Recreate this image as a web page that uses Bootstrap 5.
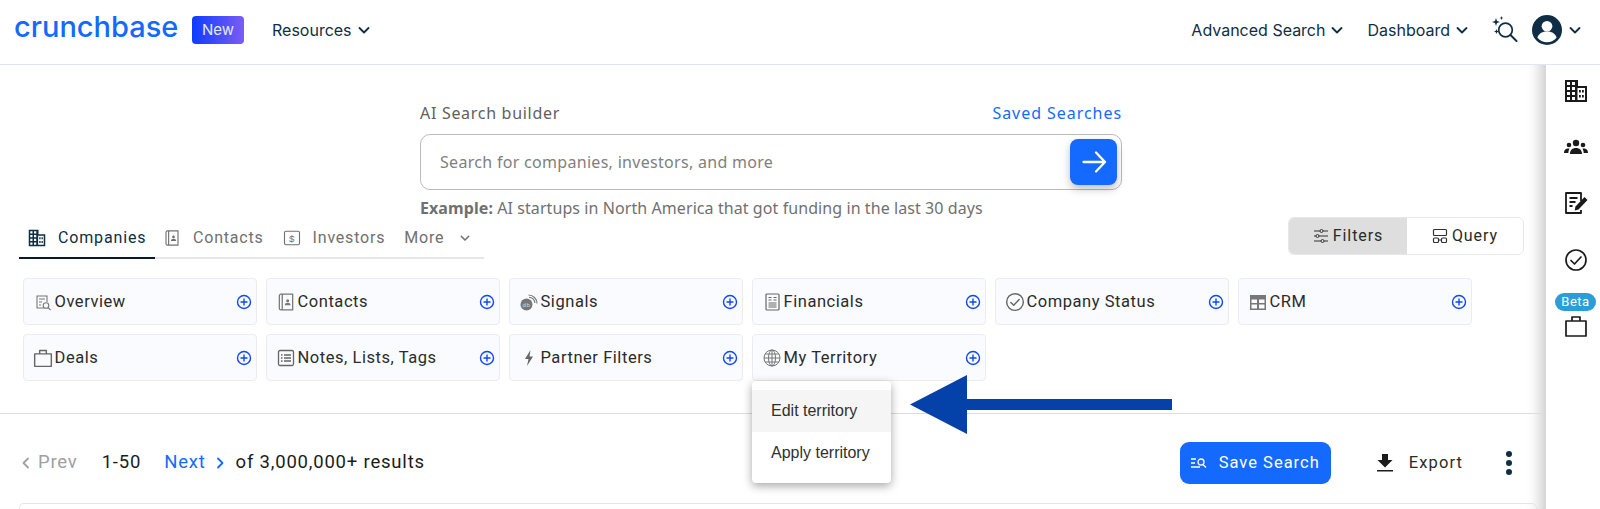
<!doctype html>
<html lang="en"><head><meta charset="utf-8"><title>Crunchbase</title>
<link href="https://cdn.jsdelivr.net/npm/bootstrap@5.3.0/dist/css/bootstrap.min.css" rel="stylesheet">
<style>
html,body{height:509px;overflow:hidden}
body{font-family:"Roboto","Noto Sans",sans-serif;color:#1c1c1c;background:#fff;font-size:16px}
.hdr{height:65px;padding:0 0 4px 14px;border-bottom:1px solid #dfe6f0;font-family:"Inter",sans-serif;color:#0f2e45;font-size:16px}
.logo{font-family:"Inter",sans-serif;font-size:29px;line-height:1;color:#146aff;font-weight:500;letter-spacing:0;margin-top:-7px;width:165px;text-decoration:none}
.newtag{width:52px;height:28px;margin-left:13px;border-radius:4px;background:linear-gradient(90deg,#0d3cff,#7c5cf5);color:#e6e8ff;font-size:15px;line-height:28px;text-align:center}
.navtxt{color:#0f2e45;text-decoration:none;display:flex;align-items:center;gap:6px;white-space:nowrap}
.sparkglass{margin-left:22px}
.avatarpic{margin-left:12px}
.navcaret{margin:0 19px 0 7px;color:#0f2e45}
.shell{height:444px}
.mainpane{width:1546px;flex:none;position:relative;box-shadow:inset -18px 0 14px -12px rgba(0,0,0,.2)}
.sidepane{width:54px;flex:none;padding:0 0 0 5px;margin-top:-2.5px}
.sideitem{height:56.4px;display:flex;align-items:center;justify-content:center;color:#1a1a1a}
.betaitem{margin-top:5px;color:#1a1a1a}
.betaitem svg{margin-top:3px}
.betatag{background:#2a9fd6;color:#fff;font-size:13px;line-height:18px;height:18px;width:41px;border-radius:9px;text-align:center;letter-spacing:.5px}
.aibox{width:702px;margin-left:420px;padding-top:38px;font-family:"Noto Sans",sans-serif}
.ailabel{font-size:16px;letter-spacing:.7px;color:#606060;line-height:20px}
.saved{color:#146aff;text-decoration:none;letter-spacing:.95px;font-size:16px;line-height:20px}
.searchbox{height:56px;margin-top:11px;border:1px solid #bbb;border-radius:10px;padding:0 4px 0 19px}
.searchbox span{color:#808080;font-size:16px;letter-spacing:.3px}
.gobtn{width:47px;height:46px;padding:0;border:0;border-radius:8px;background:#146aff;box-shadow:0 4px 8px rgba(0,0,0,.25)}
.gobtn:hover{background:#146aff}
.example{font-size:16px;color:#707070;margin-top:8px;line-height:20px;letter-spacing:.08px}
.toolrow{padding:0 22px 0 19px;margin-top:-1px;height:48px}
.tabset{width:465px;height:42px;border-bottom:2px solid #e6e6e6}
.tabitem{display:flex;align-items:center;gap:8px;height:40px;padding-top:2px;color:#707070;font-size:16px;letter-spacing:.8px;text-decoration:none;white-space:nowrap}
.tabgap{margin-left:19px}
.tabon{color:#0f2e45;border-bottom:2px solid #0a1a2a;height:42px;width:136px;padding-left:9px;letter-spacing:.85px}
.tabglyph{width:18px;height:18px;flex:none;display:block}
.viewswitch{width:236px;height:38px;border:1px solid #e8e8e8;border-radius:6px;overflow:hidden}
.viewbtn{flex:1 1 auto;display:flex;align-items:center;justify-content:center;gap:4px;font-size:16px;letter-spacing:.95px;color:#2a2a2a;text-decoration:none}
.viewon{background:#dedede;width:118px;flex:none}
.viewglyph{width:16px;height:16px;flex:none;display:block}
.filtergrid{display:grid;grid-template-columns:repeat(6,234px);grid-auto-rows:46.5px;gap:9.5px 9px;margin:13px 0 0 23px}
.fcard{background:#fafbfe;border:1px solid #ececf0;border-radius:4px;padding:2px 4px 0 8.5px;display:flex;align-items:center;gap:2px;color:#2b2b2b;font-size:16.5px;letter-spacing:.55px;white-space:nowrap}
.fcard .plus{margin-left:auto}
.ficon{width:20px;height:20px;flex:none;display:block}
.popmenu{display:block;position:absolute;left:752px;top:316px;width:139px;height:102px;min-width:0;padding:9px 0;border:0;border-radius:4px;box-shadow:0 3px 10px rgba(0,0,0,.35);font-family:"Liberation Sans",sans-serif;font-size:16px;margin:0;z-index:3}
.popmenu .dropdown-item{height:42px;line-height:42px;padding:0 0 0 19px;color:#303030}
.popmenu .hoverrow{background:#f5f5f5}
.bigarrow{position:absolute;left:908px;top:310px;z-index:4}
.splitline{border-top:1px solid #ddd;margin:32px 0 0 0;opacity:1}
.pagerow{height:89px;padding:10px 0 0 21px;font-size:18.5px;letter-spacing:.8px}
.prev{color:#a0a0a0;gap:7px}
.next{color:#146aff;text-decoration:none;gap:9px;margin-left:23px}
.pagecount{margin-left:24px}
.pagetotal{margin-left:11px}
.savebtn{width:151px;height:42px;padding:0;border:0;background:#146aff;color:#fff;border-radius:9px;font-size:16.5px;letter-spacing:1px;display:flex;align-items:center;justify-content:center;gap:12px}
.savebtn:hover{background:#146aff;color:#fff}
.exportbtn{display:flex;align-items:center;gap:16px;margin-left:46px;font-size:16.5px;letter-spacing:1.1px;color:#2b2b2b}
.kebab{margin:0 33px 0 42px;display:block}
.resultcard{height:20px;margin:0 9px 0 19px;border:1px solid #e5e5e5;border-bottom:0;border-radius:5px 5px 0 0}
</style></head><body>
<svg width="0" height="0" class="position-absolute">
<defs>
<symbol id="i-building" viewBox="0 0 24 24"><path fill="currentColor" fill-rule="evenodd" d="M1 1h13v6h9v16H1zM3 3v3h3V3zM8 3v3h3V3zM3 8v3h3V8zM8 8v3h3V8zM3 13v3h3v-3zM8 13v3h3v-3zM3 18v3h3v-3zM8 18v3h3v-3zM13.500 9v12H21V9zM15 11h1.800v2.500H15zM18 11h1.800v2.500H18zM15 16h1.800v2.500H15zM18 16h1.800v2.500H18z"/></symbol>
<symbol id="i-contact" viewBox="0 0 24 24"><path fill="none" stroke="currentColor" stroke-width="1.500" d="M6 2.500h14v19H6a2 2 0 0 1-2-2v-15a2 2 0 0 1 2-2zM7.500 2.500v19"/><circle cx="14" cy="10.500" r="1.800" fill="currentColor"/><path fill="currentColor" d="M10.500 16c0-2 1.500-3 3.500-3s3.500 1 3.500 3z"/></symbol>
<symbol id="i-dollar" viewBox="0 0 24 24"><rect x="2" y="3" width="20" height="18" rx="2" fill="none" stroke="currentColor" stroke-width="1.500"/><text x="12" y="17" font-size="13" text-anchor="middle" fill="currentColor" font-family="Liberation Sans">$</text></symbol>
<symbol id="i-plus" viewBox="0 0 16 16"><circle cx="8" cy="8" r="6.500" fill="none" stroke="#1146ff" stroke-width="1.400"/><path d="M8 4.500v7M4.500 8h7" stroke="#1146ff" stroke-width="1.400"/></symbol>
<symbol id="i-chev" viewBox="0 0 12 12"><path d="M1.500 4l4.500 4.500L10.500 4" fill="none" stroke="currentColor" stroke-width="1.800" stroke-linecap="round" stroke-linejoin="round"/></symbol>
<symbol id="i-brief" viewBox="0 0 24 24"><path fill="none" stroke="currentColor" stroke-width="1.700" stroke-linejoin="round" d="M2 7h20v15H2zM8 7V3h8v4"/></symbol>
<symbol id="i-check" viewBox="0 0 24 24"><circle cx="12" cy="12" r="10" fill="none" stroke="currentColor" stroke-width="1.700"/><path d="M7 12.500l3.500 3.500L17 9" fill="none" stroke="currentColor" stroke-width="1.700" stroke-linecap="round" stroke-linejoin="round"/></symbol>
</defs></svg>

<nav class="navbar hdr d-flex flex-nowrap align-items-center justify-content-start">
 <a class="logo" href="#">crunchbase</a>
 <span class="newtag">New</span>
 <a class="navtxt ms-4 ps-1" href="#">Resources <svg width="12" height="12"><use href="#i-chev"/></svg></a>
 <div class="d-flex align-items-center ms-auto">
  <a class="navtxt" href="#">Advanced Search <svg width="12" height="12"><use href="#i-chev"/></svg></a>
  <a class="navtxt ms-4" href="#">Dashboard <svg width="12" height="12"><use href="#i-chev"/></svg></a>
  <svg class="sparkglass" width="30" height="30" viewBox="0 0 30 30" fill="none" stroke="#0f2e45"><circle cx="15.500" cy="15" r="6.800" stroke-width="1.700"/><path d="M20.500 20l6 6" stroke-width="2" stroke-linecap="round"/><path fill="#0f2e45" stroke="none" d="M6 3l1 3 3 1-3 1-1 3-1-3-3-1 3-1zM11.500 1l.5 1.500 1.500.5-1.500.5-.5 1.500-.5-1.500-1.500-.5 1.500-.5zM6.500 14l.7 1.800 1.800.7-1.800.7-.7 1.800-.7-1.800-1.800-.7 1.800-.7z"/></svg>
  <svg class="avatarpic" width="30" height="30" viewBox="0 0 28 28"><circle cx="14" cy="14" r="14" fill="#0f2e45"/><circle cx="14" cy="10.500" r="5" fill="#fff"/><path fill="#fff" d="M5 21c1.500-4 5-5.500 9-5.500s7.500 1.500 9 5.500c-2 2.800-5.500 4.500-9 4.500S7 23.800 5 21z"/></svg>
  <svg class="navcaret" width="12" height="12"><use href="#i-chev"/></svg>
 </div>
</nav>

<div class="shell d-flex">
 <main class="mainpane">
  <section class="aibox">
   <div class="d-flex justify-content-between"><span class="ailabel">AI Search builder</span><a class="saved" href="#">Saved Searches</a></div>
   <div class="searchbox d-flex align-items-center justify-content-between">
    <span>Search for companies, investors, and more</span>
    <button class="btn gobtn" aria-label="Search"><svg width="26" height="26" viewBox="0 0 26 26" fill="none" stroke="#fff" stroke-width="2.300" stroke-linecap="round" stroke-linejoin="round"><path d="M2.500 13h21M15 3.500l9 9.500-9 9.500"/></svg></button>
   </div>
   <div class="example"><b>Example:</b> AI startups in North America that got funding in the last 30 days</div>
  </section>
  <div class="toolrow d-flex justify-content-between align-items-start">
   <div class="tabset d-flex">
    <a class="tabitem tabon" href="#"><svg class="tabglyph"><use href="#i-building"/></svg><span class="ms-1">Companies</span></a>
    <a class="tabitem ms-2" href="#"><svg class="tabglyph"><use href="#i-contact"/></svg><span class="ms-1">Contacts</span></a>
    <a class="tabitem tabgap" href="#"><svg class="tabglyph"><use href="#i-dollar"/></svg><span class="ms-1">Investors</span></a>
    <a class="tabitem tabgap" href="#">More <svg class="ms-2" width="10" height="10" viewBox="0 0 12 12"><use href="#i-chev"/></svg></a>
   </div>
   <div class="viewswitch d-flex">
    <a class="viewbtn viewon" href="#"><svg class="viewglyph" viewBox="0 0 16 16" fill="none" stroke="#333" stroke-width="1"><path d="M1 3h6M10 3h5M1 8h2M6 8h9M1 13h7M11 13h4"/><circle cx="8.500" cy="3" r="1.500"/><circle cx="4.500" cy="8" r="1.500"/><circle cx="9.500" cy="13" r="1.500"/></svg>Filters</a>
    <a class="viewbtn" href="#"><svg class="viewglyph" viewBox="0 0 16 16" fill="none" stroke="#333" stroke-width="1.200"><rect x="1.500" y="1.500" width="13" height="6" rx="1"/><rect x="1.500" y="10" width="5" height="4.500" rx="1"/><rect x="9.500" y="10" width="5" height="4.500" rx="1"/><path d="M6.500 12h3"/></svg>Query</a>
   </div>
  </div>
  <div class="filtergrid">
   <div class="fcard"><svg class="ficon" viewBox="0 0 20 20" fill="none" stroke="#777" stroke-width="1.100"><path d="M11 16H4V4h10v6M6 7h6M6 10h3M6 13h2"/><circle cx="13" cy="13.500" r="2.800"/><path d="M15 15.500l2.500 2.500"/></svg>Overview<svg class="plus" width="16" height="16"><use href="#i-plus"/></svg></div>
   <div class="fcard"><svg class="ficon" color="#777"><use href="#i-contact"/></svg>Contacts<svg class="plus" width="16" height="16"><use href="#i-plus"/></svg></div>
   <div class="fcard"><svg class="ficon" viewBox="0 0 20 20"><circle cx="7.500" cy="12.500" r="6" fill="#777"/><text x="7.500" y="14.500" font-size="6" text-anchor="middle" fill="#ddd" font-family="Liberation Sans">db</text><path fill="none" stroke="#777" stroke-width="1.100" d="M9.500 3a8.500 8.500 0 0 1 8.500 8.500M10 5.200a6 6 0 0 1 5.800 5.800"/></svg>Signals<svg class="plus" width="16" height="16"><use href="#i-plus"/></svg></div>
   <div class="fcard"><svg class="ficon" viewBox="0 0 20 20" fill="none" stroke="#666" stroke-width="1.200"><rect x="4" y="2" width="13" height="16" rx="1"/><path d="M6.500 5.500h3M11.500 5.500h3M6.500 8h3M11.500 8h3M6.500 11h8M6.500 13h8M6.500 15h8"/></svg>Financials<svg class="plus" width="16" height="16"><use href="#i-plus"/></svg></div>
   <div class="fcard"><svg class="ficon" color="#666"><use href="#i-check"/></svg>Company Status<svg class="plus" width="16" height="16"><use href="#i-plus"/></svg></div>
   <div class="fcard"><svg class="ficon" viewBox="0 0 20 20"><path fill="#777" fill-rule="evenodd" d="M2 3h16v15H2zM3.500 7.500v3.500h5.500V7.500zM11 7.500v3.500h5.500V7.500zM3.500 12.500v4h5.500v-4zM11 12.500v4h5.500v-4z"/></svg>CRM<svg class="plus" width="16" height="16"><use href="#i-plus"/></svg></div>
   <div class="fcard"><svg class="ficon" color="#666"><use href="#i-brief"/></svg>Deals<svg class="plus" width="16" height="16"><use href="#i-plus"/></svg></div>
   <div class="fcard"><svg class="ficon" viewBox="0 0 20 20" fill="none" stroke="#666" stroke-width="1.300"><rect x="2.500" y="2.500" width="15" height="15" rx="1.500"/><path d="M5 7h1.500M5 10h1.500M5 13h1.500M8 7h7M8 10h7M8 13h7"/></svg>Notes, Lists, Tags<svg class="plus" width="16" height="16"><use href="#i-plus"/></svg></div>
   <div class="fcard"><svg class="ficon" viewBox="0 0 20 20"><path fill="#666" d="M11.500 2L6 11h3.500L8 18l6-9.500h-3.500z"/></svg>Partner Filters<svg class="plus" width="16" height="16"><use href="#i-plus"/></svg></div>
   <div class="fcard"><svg class="ficon" viewBox="0 0 20 20" fill="none" stroke="#777" stroke-width="1"><circle cx="10" cy="10" r="8"/><ellipse cx="10" cy="10" rx="3.500" ry="8"/><path d="M2 10h16M3.200 6h13.600M3.200 14h13.600M10 2v16"/></svg>My Territory<svg class="plus" width="16" height="16"><use href="#i-plus"/></svg></div>
  </div>
  <ul class="dropdown-menu popmenu">
   <li><a class="dropdown-item hoverrow" href="#">Edit territory</a></li>
   <li><a class="dropdown-item" href="#">Apply territory</a></li>
  </ul>
  <svg class="bigarrow" width="266" height="60" viewBox="0 0 266 60"><path fill="#0441a8" d="M2 29.500L59 0v24h205v11H59v24z"/></svg>
  <hr class="splitline">
  <div class="pagerow d-flex align-items-center">
   <span class="prev d-flex align-items-center"><svg width="10" height="14" viewBox="0 0 10 14" fill="none" stroke="#a0a0a0" stroke-width="1.800" stroke-linecap="round" stroke-linejoin="round"><path d="M7 2.500L2.500 7 7 11.500"/></svg>Prev</span>
   <span class="pagecount">1-50</span>
   <a class="next d-flex align-items-center" href="#">Next <svg width="10" height="14" viewBox="0 0 10 14" fill="none" stroke="#146aff" stroke-width="1.800" stroke-linecap="round" stroke-linejoin="round"><path d="M3 2.500L7.500 7 3 11.500"/></svg></a>
   <span class="pagetotal">of 3,000,000+ results</span>
   <button class="btn savebtn ms-auto"><svg width="16" height="12" viewBox="0 0 16 12" fill="none" stroke="#fff" stroke-width="1.300"><path d="M0 2h5M0 6h4M0 10h9"/><circle cx="10" cy="5" r="3"/><path d="M12 7.500l3 3"/></svg>Save Search</button>
   <div class="exportbtn"><svg width="16" height="18" viewBox="0 0 16 18"><path fill="#1c1c1c" d="M5 0h6v6h4.500L8 13.500.5 6H5zM0 16h16v1.500H0z"/></svg>Export</div>
   <svg class="kebab" width="8" height="26" viewBox="0 0 8 26"><circle cx="4" cy="4" r="3" fill="#0f2e45"/><circle cx="4" cy="13" r="3" fill="#0f2e45"/><circle cx="4" cy="22" r="3" fill="#0f2e45"/></svg>
  </div>
  <div class="resultcard"></div>
 </main>
 <aside class="sidepane">
  <div class="sideitem"><svg width="24" height="24"><use href="#i-building"/></svg></div>
  <div class="sideitem"><svg width="24" height="20" viewBox="0 0 24 20" fill="#1a1a1a"><circle cx="12" cy="6" r="3.200"/><circle cx="5" cy="8" r="2.300"/><circle cx="19" cy="8" r="2.300"/><path d="M6 17c0-4 2.500-6 6-6s6 2 6 6zM0 16c0-3 1.500-4.500 4-4.500 1 0 1.500.2 1.500.2C4.700 13 4.300 14.500 4.300 16zM24 16c0-3-1.500-4.500-4-4.500-1 0-1.500.2-1.500.2.800 1.300 1.200 2.800 1.200 4.300z"/></svg></div>
  <div class="sideitem"><svg width="24" height="24" viewBox="0 0 24 24" fill="none" stroke="#1a1a1a" stroke-width="1.800" stroke-linejoin="round"><path d="M17 10V2H2v20h15v-3M5.500 7h8M5.500 11h6M5.500 15h3"/><path fill="#1a1a1a" stroke="none" d="M20.500 6l3 3-9 9.500-3.800 1 .8-4z"/></svg></div>
  <div class="sideitem"><svg width="24" height="24"><use href="#i-check"/></svg></div>
  <div class="betaitem d-flex flex-column align-items-center"><span class="betatag">Beta</span><svg width="24" height="24"><use href="#i-brief"/></svg></div>
 </aside>
</div>
<script src="https://cdn.jsdelivr.net/npm/bootstrap@5.3.0/dist/js/bootstrap.bundle.min.js"></script>
</body></html>
